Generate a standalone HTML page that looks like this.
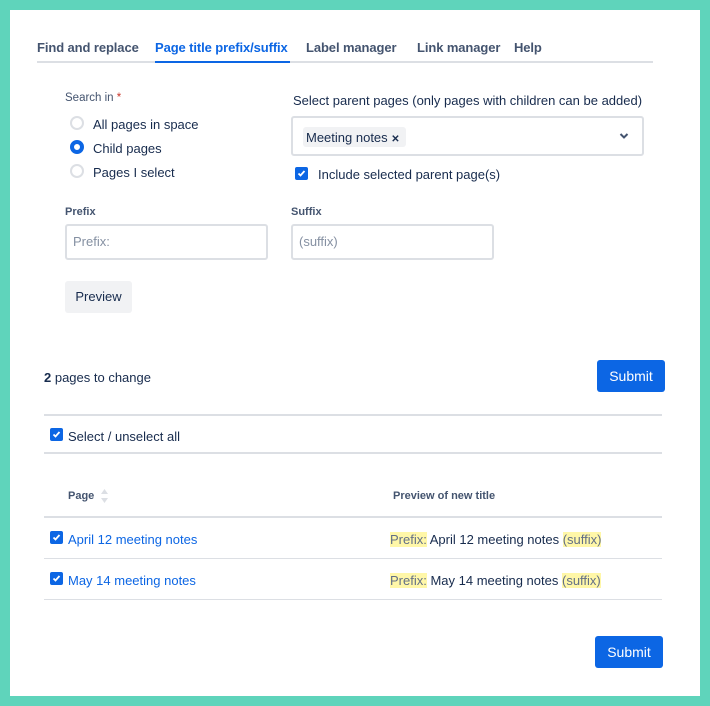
<!DOCTYPE html>
<html><head><meta charset="utf-8"><style>
*{box-sizing:border-box;margin:0;padding:0}
body{width:710px;height:706px;background:#5fd4bb;font-family:"Liberation Sans",sans-serif;color:#172b4d;position:relative;overflow:hidden}
.card{position:absolute;left:10px;top:10px;width:690px;height:686px;background:#fff}
.a{position:absolute;white-space:nowrap}
.tab{font-size:13px;font-weight:bold;color:#44546f;top:40px;letter-spacing:-0.1px}
.radio{position:absolute;width:14px;height:14px;border-radius:50%;border:2px solid #dcdfe4;left:70px}
.cb{position:absolute;width:13px;height:13px;border-radius:2px;background:#0c66e4}
.cb svg{position:absolute;left:1px;top:1px}
.lbl{font-size:11px;font-weight:bold;color:#44546f}
.inp{position:absolute;border:2px solid #dcdfe4;border-radius:3px;height:36px;font-size:13px;color:#8590a2;padding:8px 6px}
.btn{position:absolute;background:#0c66e4;color:#fff;font-size:14px;border-radius:3px;text-align:center;line-height:32px}
.hl{background:#fff7a8;color:#626f86}
.line{position:absolute;left:44px;width:618px;background:#dcdfe4}
a{color:#0c66e4;text-decoration:none}
</style></head><body>
<div class="card"></div>
<div class="a tab" style="left:37px">Find and replace</div>
<div class="a tab" style="left:155px;color:#0c66e4">Page title prefix/suffix</div>
<div class="a tab" style="left:306px">Label manager</div>
<div class="a tab" style="left:417px">Link manager</div>
<div class="a tab" style="left:514px">Help</div>
<div class="a" style="left:37px;top:61px;width:616px;height:2px;background:#dcdfe4"></div>
<div class="a" style="left:155px;top:61px;width:135px;height:2px;background:#0c66e4"></div>

<div class="a" style="left:65px;top:92px;font-size:11.5px;color:#44546f">Search in <span style="color:#c9372c">*</span></div>
<div class="radio" style="top:116px"></div>
<div class="radio" style="top:140px;border:4px solid #0c66e4"></div>
<div class="radio" style="top:164px"></div>
<div class="a" style="left:93px;top:117px;font-size:13px">All pages in space</div>
<div class="a" style="left:93px;top:141px;font-size:13px">Child pages</div>
<div class="a" style="left:93px;top:165px;font-size:13px">Pages I select</div>

<div class="a" style="left:293px;top:93px;font-size:13px">Select parent pages (only pages with children can be added)</div>
<div class="a" style="left:291px;top:116px;width:353px;height:40px;border:2px solid #dcdfe4;border-radius:3px"></div>
<div class="a" style="left:303px;top:127px;width:103px;height:20px;background:#f1f2f4;border-radius:3px;font-size:13px;padding:3px 3px">Meeting notes <span style="font-size:10px;font-weight:bold">✕</span></div>
<svg class="a" style="left:619px;top:132px" width="10" height="8" viewBox="0 0 10 8"><path d="M1.5 2l3.5 3.5L8.5 2" stroke="#44546f" stroke-width="2" fill="none"/></svg>
<div class="cb" style="left:295px;top:167px"><svg width="11" height="11" viewBox="0 0 11 11"><path d="M2.5 5.5l2 2 4-4.5" stroke="#fff" stroke-width="1.8" fill="none"/></svg></div>
<div class="a" style="left:318px;top:167px;font-size:13px">Include selected parent page(s)</div>

<div class="a lbl" style="left:65px;top:206px">Prefix</div>
<div class="a lbl" style="left:291px;top:206px">Suffix</div>
<div class="inp" style="left:65px;top:224px;width:203px">Prefix:</div>
<div class="inp" style="left:291px;top:224px;width:203px">(suffix)</div>
<div class="a" style="left:65px;top:281px;width:67px;height:32px;background:#f1f2f4;border-radius:3px;font-size:13px;text-align:center;line-height:32px">Preview</div>

<div class="a" style="left:44px;top:370px;font-size:13px"><b>2</b> pages to change</div>
<div class="btn" style="left:597px;top:360px;width:68px;height:32px">Submit</div>
<div class="line" style="top:414px;height:2px"></div>
<div class="cb" style="left:50px;top:428px"><svg width="11" height="11" viewBox="0 0 11 11"><path d="M2.5 5.5l2 2 4-4.5" stroke="#fff" stroke-width="1.8" fill="none"/></svg></div>
<div class="a" style="left:68px;top:429px;font-size:13px">Select / unselect all</div>
<div class="line" style="top:452px;height:2px"></div>

<div class="a lbl" style="left:68px;top:490px">Page</div>
<svg class="a" style="left:100px;top:488px" width="9" height="16" viewBox="0 0 9 16"><path d="M4.5 1L8 6H1z M4.5 15L8 10H1z" fill="#dcdfe4"/></svg>
<div class="a lbl" style="left:393px;top:490px">Preview of new title</div>
<div class="line" style="top:516px;height:2px"></div>

<div class="cb" style="left:50px;top:531px"><svg width="11" height="11" viewBox="0 0 11 11"><path d="M2.5 5.5l2 2 4-4.5" stroke="#fff" stroke-width="1.8" fill="none"/></svg></div>
<div class="a" style="left:68px;top:532px;font-size:13px"><a>April 12 meeting notes</a></div>
<div class="a" style="left:390px;top:532px;font-size:13px"><span class="hl">Prefix:</span> April 12 meeting notes <span class="hl">(suffix)</span></div>
<div class="line" style="top:558px;height:1px"></div>
<div class="cb" style="left:50px;top:572px"><svg width="11" height="11" viewBox="0 0 11 11"><path d="M2.5 5.5l2 2 4-4.5" stroke="#fff" stroke-width="1.8" fill="none"/></svg></div>
<div class="a" style="left:68px;top:573px;font-size:13px"><a>May 14 meeting notes</a></div>
<div class="a" style="left:390px;top:573px;font-size:13px"><span class="hl">Prefix:</span> May 14 meeting notes <span class="hl">(suffix)</span></div>
<div class="line" style="top:599px;height:1px"></div>

<div class="btn" style="left:595px;top:636px;width:68px;height:32px">Submit</div>
</body></html>
